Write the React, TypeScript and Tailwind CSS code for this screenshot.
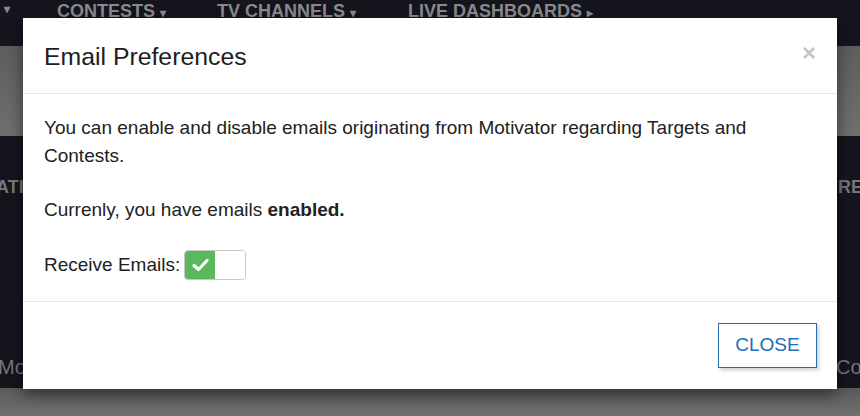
import React from 'react';

const font = { fontFamily: '"Liberation Sans", Arial, sans-serif' };

export default function App() {
  return (
    <div className="relative w-[860px] h-[416px] overflow-hidden bg-[#6d6d6d]" style={font}>
      {/* Page behind the overlay */}
      <div className="flex flex-col h-full">
        <div className="h-[46px] bg-[#15151e] flex items-start text-[#8b8b8f] font-bold text-[18px] uppercase">
          <span className="pl-[4px] w-[57px] text-[12px]">▾</span>
          <span className="w-[160px] mt-[-2px]">Contests <span className="text-[12px]">▾</span></span>
          <span className="w-[191px] mt-[-2px]">TV Channels <span className="text-[12px]">▾</span></span>
          <span className="mt-[-2px]">Live Dashboards <span className="text-[12px]">▸</span></span>
        </div>
        <div className="h-[90px] bg-gradient-to-b from-[#5e5e5e] to-[#707070]" />
        <div className="h-[252px] bg-[#15151e] flex justify-between text-[#77777b]">
          <div className="flex flex-col justify-between pt-[38px] pb-[6px]">
            <span className="font-bold text-[18px] ml-[-4px]">ATI</span>
            <span className="text-[20px] ml-[-2px]">Mo</span>
          </div>
          <div className="flex flex-col justify-between items-end pt-[38px] pb-[6px] w-[24px] overflow-hidden">
            <span className="font-bold text-[18px] pl-[2px] self-start">RE</span>
            <span className="text-[20px] self-start">Cor</span>
          </div>
        </div>
        <div className="flex-1 bg-gradient-to-b from-[#5a5a5a] to-[#717171]" />
      </div>

      {/* Modal */}
      <div className="absolute left-[23px] top-[18px] w-[814px] bg-white shadow-[0_5px_15px_rgba(0,0,0,0.5)] text-[#222]">
        <div className="flex items-center justify-between pl-[21px] pr-[21px] pt-[24px] pb-[21px] border-b border-[#e5e5e5]">
          <h4 className="text-[24.8px] leading-[30px] text-[#1d1d1d]">Email Preferences</h4>
          <span className="text-[24px] leading-[24px] font-bold text-[#c6c6c6] mt-[-8px]">×</span>
        </div>
        <div className="pl-[21px] pr-[21px] pt-[20px] pb-[21px] text-[19px] leading-[28px] text-[#222]">
          <p>You can enable and disable emails originating from Motivator regarding Targets and Contests.</p>
          <p className="mt-[26px]">
            Currenly, you have emails <b>enabled.</b>
          </p>
          <div className="mt-[26px] flex items-center gap-[4px] h-[30px]">
            <span>Receive Emails:</span>
            <div className="w-[62px] h-[30px] rounded-[4px] border border-[#c9c9c9] flex overflow-hidden">
              <div className="w-[30px] h-full bg-[#5cb85c] flex items-center justify-center">
                <svg width="17" height="14" viewBox="0 0 17 14">
                  <path d="M2 7.5 L6.5 11.5 L15 2.5" fill="none" stroke="white" strokeWidth="3.2" strokeLinecap="round" strokeLinejoin="round" />
                </svg>
              </div>
              <div className="flex-1 bg-white" />
            </div>
          </div>
        </div>
        <div className="border-t border-[#e5e5e5] flex justify-end pr-[20px] pt-[21px] pb-[21px]">
          <button className="w-[99px] h-[45px] border border-[#2a6db3] text-[#1f6cb4] text-[19px] uppercase bg-white shadow-[2px_2px_4px_rgba(0,0,0,0.2)]">
            Close
          </button>
        </div>
      </div>
    </div>
  );
}
